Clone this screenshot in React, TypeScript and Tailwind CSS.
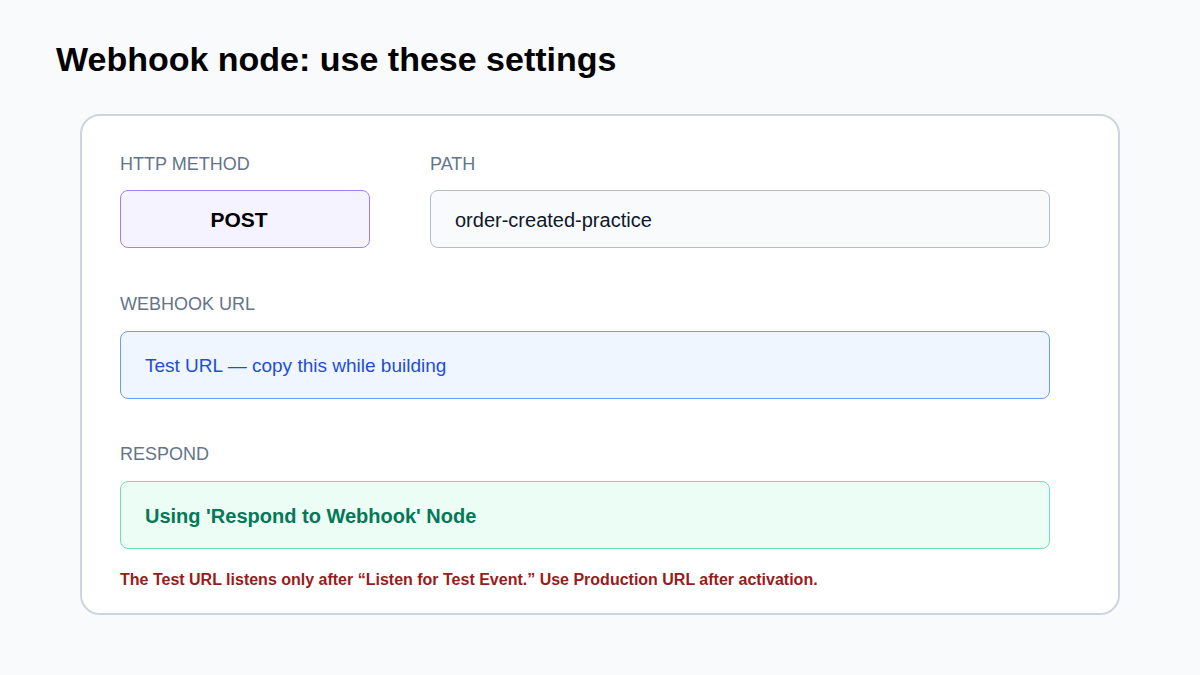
export default function App() {
  return (
    <div className="w-[1200px] h-[675px] bg-[#f8fafc] text-black" style={{ fontFamily: '"Liberation Sans", Arial, sans-serif' }}>
      <div className="pt-[39px] pl-[56px]">
        <h1 className="text-[34px] leading-[40px] font-bold">Webhook node: use these settings</h1>
      </div>
      <div className="ml-[80px] mt-[35px] w-[1040px] h-[501px] bg-white border-2 border-[#cbd5e1] rounded-[20px] pt-[38px] px-[38px]">
        <div className="flex gap-[60px]">
          <div className="flex flex-col">
            <div className="text-[18px] leading-[20px] text-[#64748b]">HTTP METHOD</div>
            <div className="mt-[16px] w-[250px] h-[58px] pt-[2px] pr-[12px] rounded-[8px] border-[1.5px] border-[#a67cf5] bg-[#f5f3ff] flex items-center justify-center text-[21px] font-bold">POST</div>
          </div>
          <div className="flex flex-col">
            <div className="text-[18px] leading-[20px] text-[#64748b]">PATH</div>
            <div className="mt-[16px] w-[620px] h-[58px] pt-[2px] rounded-[8px] border-[1.5px] border-[#b4bdcc] bg-[#f8fafc] flex items-center pl-[24px] text-[20px] text-[#0f172a]">order-created-practice</div>
          </div>
        </div>
        <div className="mt-[46px] text-[18px] leading-[20px] text-[#64748b]">WEBHOOK URL</div>
        <div className="mt-[17px] w-[930px] h-[68px] pt-[2px] rounded-[8px] border-[1.5px] border-[#6b9cf5] bg-[#eff6ff] flex items-center pl-[24px] text-[19px] text-[#1d4ed8]">Test URL — copy this while building</div>
        <div className="mt-[45px] text-[18px] leading-[20px] text-[#64748b]">RESPOND</div>
        <div className="mt-[17px] w-[930px] h-[68px] pt-[2px] rounded-[8px] border-[1.5px] border-[#6ee0b4] bg-[#ecfdf5] flex items-center pl-[24px] text-[20px] font-bold text-[#047857]">Using 'Respond to Webhook' Node</div>
        <div className="mt-[22px] text-[16px] leading-[18px] font-bold text-[#991b1b]">The Test URL listens only after “Listen for Test Event.” Use Production URL after activation.</div>
      </div>
    </div>
  );
}
